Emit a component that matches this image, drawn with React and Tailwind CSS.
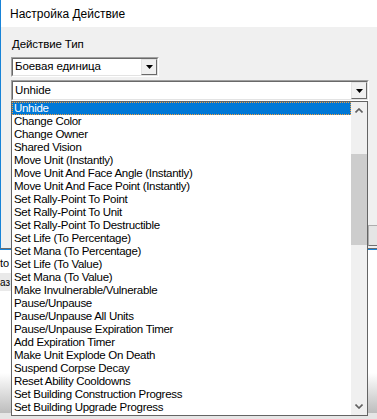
import React from 'react';

const actions = [
    'Unhide',
    'Change Color',
    'Change Owner',
    'Shared Vision',
    'Move Unit (Instantly)',
    'Move Unit And Face Angle (Instantly)',
    'Move Unit And Face Point (Instantly)',
    'Set Rally-Point To Point',
    'Set Rally-Point To Unit',
    'Set Rally-Point To Destructible',
    'Set Life (To Percentage)',
    'Set Mana (To Percentage)',
    'Set Life (To Value)',
    'Set Mana (To Value)',
    'Make Invulnerable/Vulnerable',
    'Pause/Unpause',
    'Pause/Unpause All Units',
    'Pause/Unpause Expiration Timer',
    'Add Expiration Timer',
    'Make Unit Explode On Death',
    'Suspend Corpse Decay',
    'Reset Ability Cooldowns',
    'Set Building Construction Progress',
    'Set Building Upgrade Progress',
];

function ComboButton() {
    return (
        <div className="flex h-full w-[16px] items-center justify-center border border-t-[#e3e3e3] border-l-[#e3e3e3] border-r-[#696969] border-b-[#696969] bg-[#f0f0f0]">
            <svg width="7" height="4" viewBox="0 0 7 4">
                <path d="M0 0h7L3.5 4z" fill="#000" />
            </svg>
        </div>
    );
}

function Combo({ value, width, height }) {
    return (
        <div className={`flex ${width} ${height} border border-t-[#a0a0a0] border-l-[#a0a0a0] border-r-[#ffffff] border-b-[#ffffff]`}>
            <div className="flex flex-1 items-stretch border border-t-[#696969] border-l-[#696969] border-r-[#e3e3e3] border-b-[#e3e3e3] bg-white">
                <div className="flex flex-1 items-center pl-[2px] text-[11.5px] tracking-[-0.1px] text-black">{value}</div>
                <ComboButton />
            </div>
        </div>
    );
}

export default function App() {
    return (
        <div className="relative h-[419px] w-[377px] overflow-hidden bg-[#f0f0f0] font-['Liberation_Sans',Arial,sans-serif] text-black">
            {/* Dialog window */}
            <div className="flex h-[249px] flex-col border-l border-b border-l-[#1883d7] border-b-[#6b6b6b]">
                <div className="flex h-[27px] items-center bg-white pl-[9px] text-[12px]">Настройка Действие</div>
                <div className="flex flex-col pl-[10px]">
                    <div className="ml-[1px] mt-[10px] text-[11.5px] leading-[15px] tracking-[-0.1px]">Действие Тип</div>
                    <div className="mt-[5px]">
                        <Combo value="Боевая единица" width="w-[148px]" height="h-[20px]" />
                    </div>
                    <div className="mt-[3px]">
                        <Combo value="Unhide" width="w-[358px]" height="h-[21px]" />
                    </div>
                    <div className="ml-[357px] mt-[124px] h-[21px] w-[40px] border border-[#adadad] border-b-[#707070] bg-[#e5e5e5]" />
                </div>
            </div>

            {/* Window behind */}
            <div className="flex h-[170px] flex-col border-t border-t-[#1883d7] bg-white">
                <div className="mt-[5px] w-[11px] overflow-hidden whitespace-nowrap text-[11px] leading-[16px]">
                    <span>to</span>
                </div>
                <div className="mt-[2px] flex h-[18px] w-[11px] items-center overflow-hidden whitespace-nowrap bg-[#e9e9e9] text-[10px]">
                    <span>аз</span>
                </div>
                <div className="mt-auto h-[40px] bg-gradient-to-b from-[#ffffff] to-[#bdbdbd]" />
                <div className="h-[6px] bg-[#e6e6e6]" />
            </div>

            {/* Open dropdown list */}
            <div className="absolute left-[11px] top-[101px] flex h-[315px] w-[357px] border border-[#646464] bg-white">
                <div className="flex flex-1 flex-col">
                    {actions.map((name, i) =>
                        i === 0 ? (
                            <div
                                key={name}
                                className="flex h-[13px] items-center border border-dotted border-[#f0a040] bg-[#0078d7] pl-[1px] text-[11.5px] tracking-[-0.3px] text-white"
                            >
                                {name}
                            </div>
                        ) : (
                            <div key={name} className="flex h-[13px] items-center pl-[2px] text-[11.5px] tracking-[-0.3px] whitespace-nowrap">
                                {name}
                            </div>
                        )
                    )}
                </div>
                <div className="flex w-[16px] flex-col bg-[#f0f0f0]">
                    <div className="flex h-[17px] items-center justify-center">
                        <svg width="8" height="5" viewBox="0 0 8 5">
                            <path d="M0.5 4.5L4 1l3.5 3.5" fill="none" stroke="#606060" strokeWidth="1.6" />
                        </svg>
                    </div>
                    <div className="mt-[35px] h-[91px] bg-[#cdcdcd]" />
                    <div className="flex-1" />
                    <div className="flex h-[17px] items-center justify-center">
                        <svg width="8" height="5" viewBox="0 0 8 5">
                            <path d="M0.5 0.5L4 4l3.5-3.5" fill="none" stroke="#606060" strokeWidth="1.6" />
                        </svg>
                    </div>
                </div>
            </div>
        </div>
    );
}
